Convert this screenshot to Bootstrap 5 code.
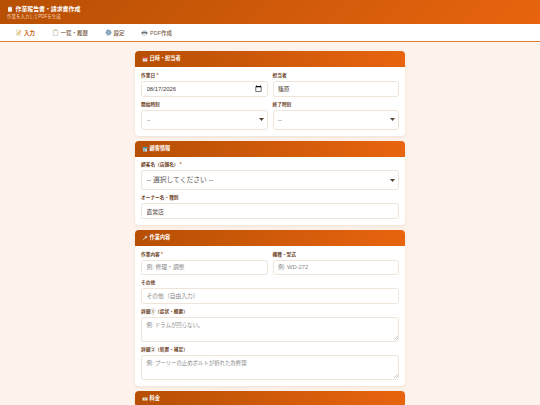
<!DOCTYPE html>
<html lang="ja">
<head>
<meta charset="utf-8">
<title>作業報告書・請求書作成</title>
<link href="https://cdn.jsdelivr.net/npm/bootstrap@5.3.0/dist/css/bootstrap.min.css" rel="stylesheet">
<style>
html,body{height:405px;overflow:hidden}
body{background:#fdf3ec;font-family:"Liberation Sans","Noto Sans CJK JP",sans-serif;color:#5b3a24}
.app-head{background:linear-gradient(135deg,#b64f04,#e8640f);color:#fff;height:24px;padding:4.5px 7px 0;box-shadow:0 1px 2px rgba(120,60,10,.3)}
.app-title{font-size:5.9px;font-weight:700;line-height:9px;margin:0;display:flex;align-items:center;gap:2.5px}
.app-sub{font-size:4.5px;line-height:6px;color:#fbd5b5;margin-top:.5px}
.app-nav{background:#fff;height:18px;border-bottom:1.3px solid #dd7a2e;padding-left:7px;align-items:center;flex-wrap:nowrap}
.app-nav .nav-link{font-size:5.5px;font-weight:500;color:#7a5a45;padding:0 8px;display:flex;align-items:center;gap:2px;line-height:8px;white-space:nowrap;margin-right:.5px}
.app-nav .nav-link.active{color:#c2570a;font-weight:700}
.ic{width:6px;height:6px;flex:none}
.app-nav .ic{width:7px;height:7px}
.page-wrap{width:270px;margin:9px auto 0}
.sheet{border:0;border-radius:4px;background:#fff;margin-bottom:5px;box-shadow:0 1px 3px rgba(150,90,40,.12);overflow:hidden}
.sheet .card-header{background:linear-gradient(90deg,#b64f04,#e8640f);color:#fff;border:0;border-radius:0;height:16px;padding:0 6.5px;font-size:5.2px;font-weight:700;display:flex;align-items:center;gap:2px}
.sheet .card-body{padding:5.5px 6px 1px}
.tight{--bs-gutter-x:5px;--bs-gutter-y:0}
.fld{margin-bottom:5px}
.fld .form-label{font-size:4.7px;font-weight:600;color:#6b4226;line-height:6px;margin:0 0 2px;display:block}
.fld .req{color:#c2570a}
.form-control,.form-select{font-family:inherit;font-size:5.8px;color:#4a3a30;border:1px solid #efe4d9;border-radius:2.5px;padding:0 4.5px;min-height:0;line-height:8px;box-shadow:none}
.h16{height:16px}
.h155{height:15.5px}
.form-control::placeholder{color:#8a8a8a;opacity:1}
input[type=date].form-control{font-family:"Liberation Sans",sans-serif;font-size:5.9px}
input[type=date]::-webkit-calendar-picker-indicator{width:7px;height:7px;padding:0;margin:0 0 0 2px}
input[type=date]::-webkit-datetime-edit{padding:0}
.form-select{background-image:url("data:image/svg+xml,%3csvg xmlns='http://www.w3.org/2000/svg' viewBox='0 0 10 6'%3e%3cpath fill='%23554433' d='M0 0h10L5 6z'/%3e%3c/svg%3e");background-size:5px 3px;background-position:right 3px center;height:20px;padding-right:12px;color:#5f5a55}
.sel-big{font-size:6.8px}
textarea.form-control{height:25px;padding-top:3px;font-size:5.4px;resize:none;background-image:url("data:image/svg+xml,%3csvg xmlns='http://www.w3.org/2000/svg' viewBox='0 0 4 4'%3e%3cpath stroke='%23999' stroke-width='.5' d='M0 4L4 0M2 4l2-2'/%3e%3c/svg%3e");background-repeat:no-repeat;background-size:4px 4px;background-position:right .5px bottom .5px}
</style>
</head>
<body>
<header class="app-head">
  <h1 class="app-title"><svg class="ic" viewBox="0 0 12 12"><rect x="2" y="2" width="8" height="9.5" rx="1" fill="#f4f1ee"/><rect x="4" y="1" width="4" height="2" fill="#b9b3ad"/></svg>作業報告書・請求書作成</h1>
  <div class="app-sub">作業を入力してPDFを生成</div>
</header>
<nav class="nav app-nav">
  <a class="nav-link active" href="#"><svg class="ic" viewBox="0 0 12 12"><rect x="2" y="1.5" width="8" height="9.5" fill="#f3ecd8" stroke="#d9cfb6" stroke-width=".6"/><path d="M4 8.5L9.5 2.5l1.2 1L5.2 9.5 3.6 10z" fill="#e0a63a"/></svg>入力</a>
  <a class="nav-link" href="#"><svg class="ic" viewBox="0 0 12 12"><rect x="2.2" y="2" width="7.6" height="9.3" rx=".6" fill="#fff" stroke="#a89e94" stroke-width=".8"/><rect x="4" y="1" width="4" height="2" fill="#c9b79c"/></svg>一覧・履歴</a>
  <a class="nav-link" href="#"><svg class="ic" viewBox="0 0 12 12"><circle cx="6" cy="6" r="3.2" fill="#9fbccd" stroke="#6f94ad" stroke-width="2"/><circle cx="6" cy="6" r="5" fill="none" stroke="#6f94ad" stroke-width="1.2" stroke-dasharray="1.5 1.4"/></svg>設定</a>
  <a class="nav-link" href="#"><svg class="ic" viewBox="0 0 12 12"><rect x="3" y="1.5" width="6" height="3.5" fill="#dfe3e6"/><rect x="1" y="4.5" width="10" height="4.5" rx=".8" fill="#68757e"/><rect x="3" y="7.5" width="6" height="3.5" fill="#eef0f1" stroke="#8b959c" stroke-width=".4"/></svg>PDF作成</a>
</nav>
<main class="page-wrap">
  <section class="card sheet">
    <div class="card-header"><svg class="ic" viewBox="0 0 12 12"><rect x="1.5" y="2" width="9" height="9" rx="1" fill="#f5ecec"/><rect x="1.5" y="2" width="9" height="3" fill="#d9483b"/><path d="M3.5 7h1.5v1.5H3.5zM6.5 7H8v1.5H6.5z" fill="#8a6a60"/></svg>日時・担当者</div>
    <div class="card-body">
      <div class="row tight">
        <div class="col-6 fld"><label class="form-label">作業日 <span class="req">*</span></label><input class="form-control h16" type="date" value="2026-08-17"></div>
        <div class="col-6 fld"><label class="form-label">担当者</label><input class="form-control h16" type="text" value="篠原"></div>
      </div>
      <div class="row tight">
        <div class="col-6 fld"><label class="form-label">開始時刻</label><select class="form-select"><option>--</option></select></div>
        <div class="col-6 fld"><label class="form-label">終了時刻</label><select class="form-select"><option>--</option></select></div>
      </div>
    </div>
  </section>
  <section class="card sheet">
    <div class="card-header"><svg class="ic" viewBox="0 0 12 12"><rect x="2" y="5" width="8" height="6" fill="#d8e6ee"/><path d="M1.5 2h9l.8 3H.7z" fill="#4f9fb8"/><rect x="3" y="7" width="2.5" height="4" fill="#4a7f96"/><rect x="6.5" y="6.5" width="2.5" height="2" fill="#86bcd0"/></svg>顧客情報</div>
    <div class="card-body">
      <div class="fld"><label class="form-label">顧客名（店舗名） <span class="req">*</span></label><select class="form-select sel-big"><option>-- 選択してください --</option></select></div>
      <div class="fld"><label class="form-label">オーナー名・種別</label><input class="form-control h16" type="text" value="直営店"></div>
    </div>
  </section>
  <section class="card sheet">
    <div class="card-header"><svg class="ic" viewBox="0 0 12 12"><path d="M10.5 2.2L8.8 3.9 8 3.1l1.6-1.7a3 3 0 0 0-3.7 3.8L1.5 9.6l1 1 4.4-4.4a3 3 0 0 0 3.6-4z" fill="#d9d4cf"/></svg>作業内容</div>
    <div class="card-body">
      <div class="row tight">
        <div class="col-6 fld"><label class="form-label">作業内容 <span class="req">*</span></label><input class="form-control h155" type="text" placeholder="例: 修理・調整"></div>
        <div class="col-6 fld"><label class="form-label">機種・型式</label><input class="form-control h155" type="text" placeholder="例: WD-272"></div>
      </div>
      <div class="fld"><label class="form-label">その他</label><input class="form-control h155" type="text" placeholder="その他（自由入力）"></div>
      <div class="fld"><label class="form-label">詳細①（症状・概要）</label><textarea class="form-control" placeholder="例: ドラムが回らない。"></textarea></div>
      <div class="fld"><label class="form-label">詳細②（処置・補足）</label><textarea class="form-control" placeholder="例: プーリーの止めボルトが折れた為修理"></textarea></div>
    </div>
  </section>
  <section class="card sheet">
    <div class="card-header"><svg class="ic" viewBox="0 0 12 12"><rect x="1" y="3" width="10" height="6" rx=".6" fill="#e9e2cf"/><circle cx="6" cy="6" r="1.6" fill="#a58d5a"/></svg>料金</div>
  </section>
</main>
<script src="https://cdn.jsdelivr.net/npm/bootstrap@5.3.0/dist/js/bootstrap.bundle.min.js"></script>
</body>
</html>
